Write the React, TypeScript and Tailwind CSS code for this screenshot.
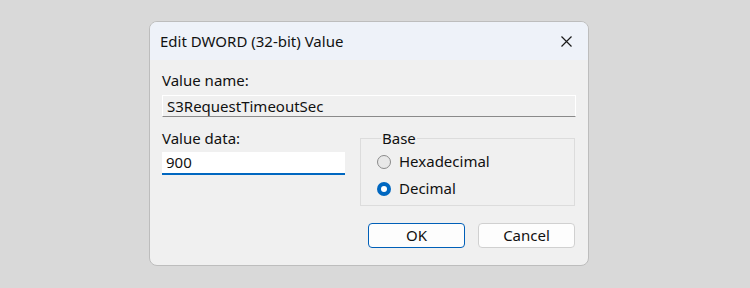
import React from 'react';

function Radio({ checked, label }: { checked?: boolean; label: string }) {
  return (
    <div className="flex items-center h-[27px]">
      {checked ? (
        <span className="w-[14px] h-[14px] rounded-full bg-[#0067c0] flex items-center justify-center">
          <span className="w-[6px] h-[6px] rounded-full bg-white" />
        </span>
      ) : (
        <span className="w-[14px] h-[14px] rounded-full border border-[#8a8a8a] bg-[#e8e8e8]" />
      )}
      <span className="ml-[8px]">{label}</span>
    </div>
  );
}

export default function App() {
  return (
    <div
      className="w-[750px] h-[288px] bg-[#d9d9d9] pt-[21px] pl-[149px] text-[15px] text-[#111]"
      style={{ fontFamily: '"Noto Sans", "Liberation Sans", sans-serif' }}
    >
      <div className="w-[440px] h-[245px] rounded-[8px] border border-[#bdbdbd] bg-[#f0f0f0] overflow-hidden">
        <div className="h-[38px] bg-[#eef2f9] flex items-center justify-between pl-[10px] pr-[16px]">
          <span className="leading-[20px]">Edit DWORD (32-bit) Value</span>
          <svg width="11" height="11" viewBox="0 0 11 11">
            <path d="M0.5 0.5 L10.5 10.5 M10.5 0.5 L0.5 10.5" stroke="#1a1a1a" strokeWidth="1.2" />
          </svg>
        </div>

        <div className="pl-[12px] pr-[12px] pt-[10px]">
          <div className="h-[20px] leading-[20px]">Value name:</div>
          <div className="mt-[5px] h-[22px] border border-white border-b-[#8a8a8a] flex items-center pl-[4px]">
            S3RequestTimeoutSec
          </div>

          <div className="mt-[11px] flex gap-[15px]">
            <div className="w-[183px]">
              <div className="h-[20px] leading-[20px]">Value data:</div>
              <div className="mt-[4px] h-[23px] bg-white border-b-2 border-[#0067c0] flex items-center pl-[4px]">
                900
              </div>
            </div>
            <fieldset className="w-[215px] h-[78px] border border-[#dcdcdc] pl-[16px]">
              <legend className="ml-[4px] px-[1px] leading-[20px]">Base</legend>
              <Radio label="Hexadecimal" />
              <Radio checked label="Decimal" />
            </fieldset>
          </div>

          <div className="mt-[17px] flex justify-end gap-[13px] pr-[1px]">
            <button className="w-[97px] h-[25px] rounded-[4px] border border-[#005fb8] bg-[#fdfdfd]">OK</button>
            <button className="w-[97px] h-[25px] rounded-[4px] border border-[#d0d0d0] bg-[#fdfdfd]">Cancel</button>
          </div>
        </div>
      </div>
    </div>
  );
}
